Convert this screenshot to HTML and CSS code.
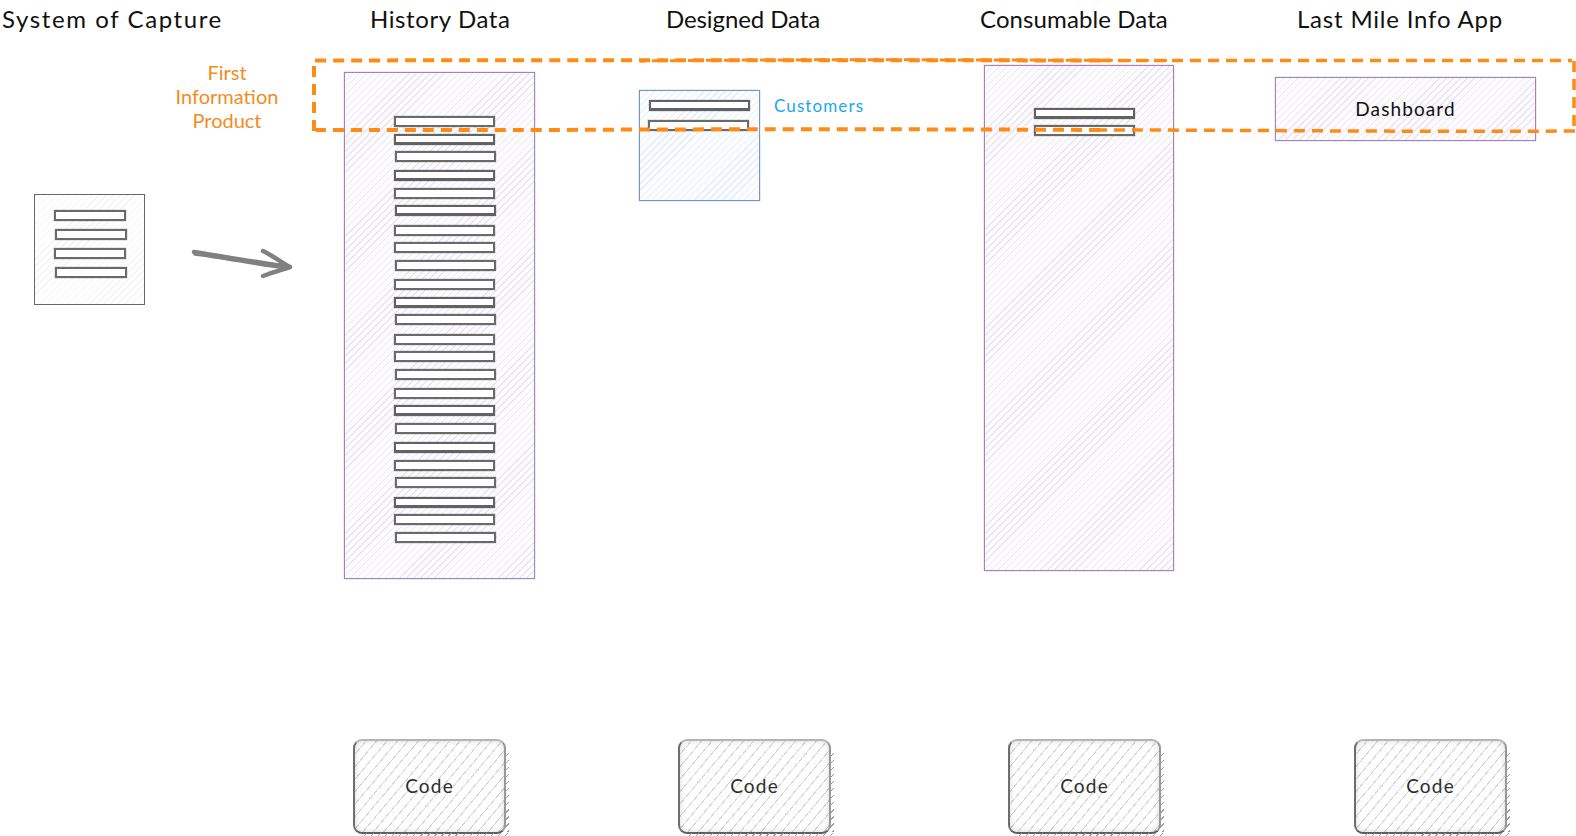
FILE: index.html
```html
<!DOCTYPE html>
<html lang="en">
<head>
<meta charset="utf-8">
<title>Data product diagram</title>
<link rel="stylesheet" href="styles.css">
</head>
<body>
<main class="canvas">
  <h2 class="title t-capture">System of Capture</h2>
  <h2 class="title t-history">History Data</h2>
  <h2 class="title t-designed">Designed Data</h2>
  <h2 class="title t-consumable">Consumable Data</h2>
  <h2 class="title t-lastmile">Last Mile Info App</h2>

  <p class="first-product">First<br>Information<br>Product</p>

  <div class="node sheet n-capture">
    <div class="bar small"></div>
    <div class="bar small shift"></div>
    <div class="bar small"></div>
    <div class="bar small shift"></div>
  </div>

  <svg class="arrow" viewBox="0 0 110 40" aria-hidden="true">
    <path d="M3 9 C35 14 70 20 98 24 M72 8 C82 13 90 19 99 24 C90 27 82 29 72 33"/>
    <path class="thin" d="M4 11 C35 15 70 22 97 25"/>
  </svg>

  <div class="node purple n-history">
    <div class="group"><div class="bar"></div><div class="bar heavy"></div><div class="bar shift"></div></div>
    <div class="group"><div class="bar heavy"></div><div class="bar"></div><div class="bar shift heavy"></div></div>
    <div class="group"><div class="bar"></div><div class="bar"></div><div class="bar shift"></div></div>
    <div class="group"><div class="bar"></div><div class="bar heavy"></div><div class="bar shift"></div></div>
    <div class="group"><div class="bar"></div><div class="bar"></div><div class="bar shift"></div></div>
    <div class="group"><div class="bar"></div><div class="bar heavy"></div><div class="bar shift"></div></div>
    <div class="group"><div class="bar heavy"></div><div class="bar"></div><div class="bar shift"></div></div>
    <div class="group"><div class="bar heavy"></div><div class="bar"></div><div class="bar shift"></div></div>
  </div>

  <div class="node blue n-designed">
    <div class="bar shift heavy"></div>
    <div class="bar"></div>
  </div>
  <span class="customers">Customers</span>

  <div class="node purple n-consumable">
    <div class="bar heavy"></div>
    <div class="bar"></div>
  </div>

  <div class="node purple n-dashboard">Dashboard</div>

  <div class="code c-history"><span>Code</span></div>
  <div class="code c-designed"><span>Code</span></div>
  <div class="code c-consumable"><span>Code</span></div>
  <div class="code c-lastmile"><span>Code</span></div>

  <svg class="frame" viewBox="0 0 1576 836" aria-hidden="true">
    <path class="dash" d="M314 131 L314 61"/>
    <path class="dash" d="M315 60.5 C600 60 800 60 1100 60.5"/>
    <path class="dash dash-over" d="M640 61 C800 59 950 60 1170 60.5"/>
    <path class="dash dash-thin" d="M1100 60.5 L1572 60.5"/>
    <path class="dash dash-thin" d="M1574 61 L1574 130"/>
    <path class="dash dash-thin" d="M1575 131 C1400 132 1250 130 1100 130"/>
    <path class="dash" d="M1100 130 C900 129 700 129 550 130 C450 130 380 130 316 130"/>
  </svg>
</main>
</body>
</html>
```

FILE: styles.css
```css
* { box-sizing: border-box; }

html, body {
  margin: 0;
  padding: 0;
  background: #fff;
}

.canvas {
  position: relative;
  width: 1576px;
  height: 836px;
  overflow: hidden;
  font-family: "Lato", "Open Sans", sans-serif;
  color: #111;
}

.title {
  position: absolute;
  top: 4px;
  margin: 0;
  font-size: 24px;
  line-height: 30px;
  font-weight: 400;
  white-space: nowrap;
}

.t-capture { left: 2px; letter-spacing: 1.6px; }
.t-history { left: 370px; letter-spacing: .6px; }
.t-designed { left: 666px; letter-spacing: -.1px; }
.t-consumable { left: 980px; letter-spacing: .1px; }
.t-lastmile { left: 1297px; letter-spacing: .8px; }

.first-product {
  position: absolute;
  left: 167px;
  top: 60px;
  width: 120px;
  margin: 0;
  font-size: 20px;
  line-height: 24px;
  text-align: center;
  color: #f28c1e;
}

.node {
  position: absolute;
  display: flex;
  flex-direction: column;
  border: 1px solid;
}

.sheet {
  border-color: #666;
  background: repeating-linear-gradient(135deg, #f3f3f3 0 1px, #fff 1px 5px);
}

.purple {
  border-color: #a184ba;
  box-shadow: 0 0 1px #a184ba;
  background: repeating-linear-gradient(135deg, #ece4f0 0 1px, #fcfbfd 1px 5px);
}

.blue {
  border-color: #7596c5;
  box-shadow: 0 0 1px #7596c5;
  background: repeating-linear-gradient(135deg, #e4edf7 0 1px, #fcfdfe 1px 5px);
}

.bar {
  width: 101px;
  height: 11px;
  flex: none;
  background: #fff;
  border: 2px solid #6a6a6a;
  box-shadow: 0 0 1px #777;
}

.bar.heavy { border-color: #626262; border-bottom-width: 3px; }
.bar.shift { margin-left: 1px; }
.bar.small { width: 72px; }

.group {
  display: flex;
  flex-direction: column;
  gap: 6.5px;
}

.n-capture {
  left: 34px;
  top: 194px;
  width: 111px;
  height: 111px;
  padding: 14.5px 0 0 18.5px;
  gap: 8px;
}

.n-history {
  left: 344px;
  top: 72px;
  width: 191px;
  height: 507px;
  padding: 43px 0 0 49px;
  gap: 8.4px;
}

.n-designed {
  left: 639px;
  top: 90px;
  width: 121px;
  height: 111px;
  padding: 9px 0 0 8px;
  gap: 9px;
}

.customers {
  position: absolute;
  left: 774px;
  top: 95px;
  font-size: 17px;
  line-height: 21px;
  letter-spacing: 1.1px;
  color: #1aa7ee;
}

.n-consumable {
  left: 984px;
  top: 65px;
  width: 190px;
  height: 506px;
  padding: 42px 0 0 48.5px;
  gap: 6px;
}

.n-dashboard {
  left: 1275px;
  top: 77px;
  width: 261px;
  height: 64px;
  align-items: center;
  justify-content: center;
  padding-bottom: 1px;
  font-size: 19px;
  letter-spacing: 1.1px;
  color: #111;
}

.code {
  position: absolute;
  top: 739px;
  width: 153px;
  height: 95px;
  display: flex;
  align-items: center;
  justify-content: center;
  font-size: 19px;
  letter-spacing: 1.2px;
  color: #2d2d2d;
  border: 2px solid #6e6e6e;
  border-top-color: #b5b5b5;
  border-right-color: #989898;
  border-bottom-color: #5e5e5e;
  border-radius: 9px;
  background: repeating-linear-gradient(130deg, #d6d6d6 0 1px, #fff 1px 8px);
  box-shadow: inset 0 0 6px rgba(0, 0, 0, .16);
}

.code::after {
  content: "";
  position: absolute;
  left: 4px;
  right: -5px;
  bottom: -5px;
  height: 4px;
  background: repeating-linear-gradient(135deg, #9c9c9c 0 1px, transparent 1px 5px);
}

.code::before {
  content: "";
  position: absolute;
  top: 8px;
  bottom: 0;
  right: -5px;
  width: 4px;
  background: repeating-linear-gradient(135deg, #9c9c9c 0 1px, transparent 1px 5px);
}

.code span {
  position: relative;
  top: -1px;
}

.c-history { left: 353px; }
.c-designed { left: 678px; }
.c-consumable { left: 1008px; }
.c-lastmile { left: 1354px; }

.arrow {
  position: absolute;
  left: 191px;
  top: 243px;
  width: 110px;
  height: 40px;
  overflow: visible;
}

.arrow path {
  fill: none;
  stroke: #808080;
  stroke-width: 4.5px;
  stroke-linecap: round;
  stroke-linejoin: round;
}

.arrow .thin { stroke-width: 3.5px; }

.frame {
  position: absolute;
  left: 0;
  top: 0;
  width: 1576px;
  height: 836px;
  pointer-events: none;
}

.dash {
  fill: none;
  stroke: #ff8a14;
  stroke-width: 4px;
  stroke-dasharray: 11 7;
}

.dash-over {
  stroke-width: 3px;
  stroke-dashoffset: 6;
}

.dash-thin {
  stroke-width: 3.5px;
  stroke-dasharray: 11 7;
}
```
